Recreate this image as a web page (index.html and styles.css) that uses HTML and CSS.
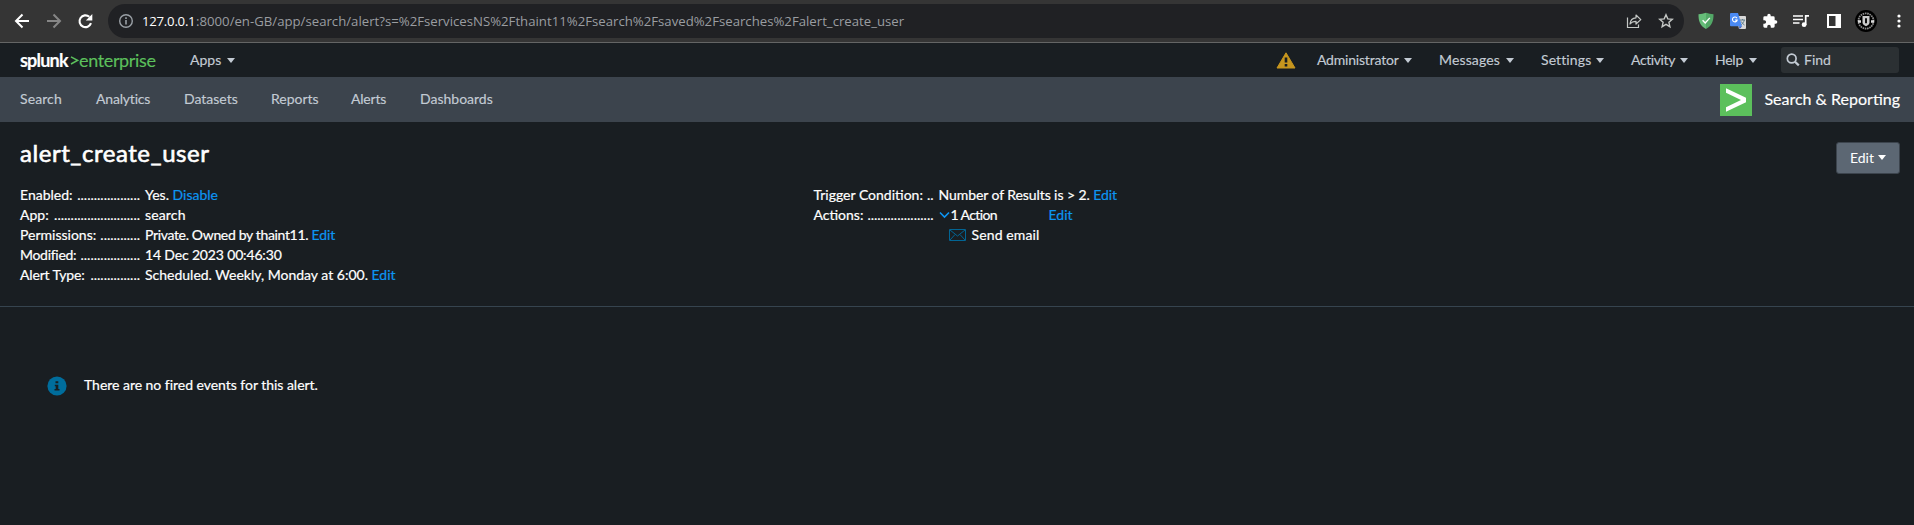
FILE: index.html
```html
<!DOCTYPE html>
<html lang="en">
<head>
<meta charset="utf-8">
<title>alert_create_user | Splunk</title>
<link rel="stylesheet" href="styles.css">
</head>
<body>
<div class="browser">
  <svg class="nav-icons" width="84" height="20" viewBox="0 0 84 20" fill="none" stroke-width="2">
    <path d="M15 10H2M8.500 3.500L2 10l6.500 6.500" stroke="#fff"/>
    <path d="M33 10h13M39.500 3.500L46 10l-6.500 6.500" stroke="#868686"/>
    <path d="M77 12.200A5.900 5.900 0 1 1 75.300 5.800" stroke="#fff" stroke-width="2.100"/>
    <path d="M78.300 3v6.500h-6.500z" fill="#fff"/>
  </svg>
  <div class="omnibox">
    <svg class="site-info" width="16" height="16" viewBox="0 0 16 16"><circle cx="8" cy="8" r="6.300" fill="none" stroke="#9aa0a6" stroke-width="1.400"/><path d="M8 7v4.500M8 4.300v1.600" stroke="#9aa0a6" stroke-width="1.600"/></svg>
    <div class="url"><span class="host">127.0.0.1</span><span class="path">:8000/en-GB/app/search/alert?s=%2FservicesNS%2Fthaint11%2Fsearch%2Fsaved%2Fsearches%2Falert_create_user</span></div>
    <svg class="share" width="16" height="16" viewBox="0 0 16 16" fill="none" stroke="#c4c7c5" stroke-width="1.200"><path d="M1.500 4.500v10h11v-3"/><path d="M4 11c.4-4 2.800-6 6-6.200V2l4.800 4.600L10 11V8.300C7.600 8.300 5.500 9 4 11z" stroke-linejoin="round"/></svg>
    <svg class="star" width="16" height="16" viewBox="0 0 16 16"><path d="M8 1.800l1.800 4.100 4.500.4-3.400 3 1 4.400L8 11.400l-3.900 2.300 1-4.400-3.400-3 4.500-.4z" fill="none" stroke="#c4c7c5" stroke-width="1.400"/></svg>
  </div>
  <div class="extensions">
    <svg class="shield" width="16" height="18" viewBox="0 0 16 18"><path d="M8 .8c2.500.9 5 1.300 7.500 1.400C15.700 9.500 13.500 14 8 17z" fill="#53a867"/><path d="M8 .8C5.500 1.700 3 2.100.5 2.200.3 9.500 2.500 14 8 17z" fill="#66bd79"/><path d="M4.600 8.300l2.600 2.600 4.600-5" fill="none" stroke="#fff" stroke-width="1.400"/></svg>
    <svg class="translate" width="16" height="16" viewBox="0 0 16 16"><path d="M6 3h9a1 1 0 0 1 1 1v11a1 1 0 0 1-1 1H9z" fill="#d8d8d8"/><path d="M9 13.300h3.200L9.500 16z" fill="#3a5bbd"/><path d="M1 0h7l4 13.300H1a1 1 0 0 1-1-1V1a1 1 0 0 1 1-1z" fill="#4a8af4"/><path d="M7 5.300A2.400 2.400 0 1 0 7.200 7H5" fill="none" stroke="#fff" stroke-width="1.100"/><path d="M10 7h5M12.500 6v1M14.300 7c-.5 2-1.500 3.500-3 4.600M11.300 8.500c.7 1.500 1.700 2.500 3.200 3.500" fill="none" stroke="#607d8b"/></svg>
    <svg class="puzzle" width="16" height="16" viewBox="0 0 24 24"><path fill="#fff" d="M20.500 11H19V7a2 2 0 0 0-2-2h-4V3.500a2.500 2.500 0 0 0-5 0V5H4a2 2 0 0 0-2 2v3.800h1.500a2.700 2.700 0 0 1 0 5.400H2V20a2 2 0 0 0 2 2h3.800v-1.500a2.700 2.700 0 0 1 5.400 0V22H17a2 2 0 0 0 2-2v-4h1.500a2.500 2.500 0 0 0 0-5z"/></svg>
    <svg class="media" width="17" height="14" viewBox="0 0 17 14"><path d="M0 2h10M0 5.500h10M0 9h6.500M12.700 11V1.900H16" fill="none" stroke="#fff" stroke-width="1.700"/><circle cx="11.100" cy="10.700" r="2.400" fill="#fff"/></svg>
    <svg class="panel" width="14" height="14" viewBox="0 0 14 14"><path fill="#fff" fill-rule="evenodd" d="M0 0h14v14H0zM2 2v10h6.500V2z"/></svg>
    <svg class="avatar" width="22" height="22" viewBox="0 0 22 22"><circle cx="11" cy="11" r="11" fill="#000"/><circle cx="11" cy="11" r="7.600" fill="none" stroke="#8a8a8a" stroke-width="1.800" stroke-dasharray="1.600 .7"/><path d="M7.500 6h7v6.500c0 2-1.700 3-3.500 3.700-1.800-.7-3.500-1.700-3.500-3.700z" fill="#ccc"/><path d="M11 8.300v5" stroke="#111" stroke-width="2"/><path d="M3 11.500h3M16 11.500h3" stroke="#ddd" stroke-width="2.400"/></svg>
    <svg class="dots-menu" width="4" height="16" viewBox="0 0 4 16" fill="#fff"><circle cx="2" cy="3" r="1.600"/><circle cx="2" cy="8" r="1.600"/><circle cx="2" cy="13" r="1.600"/></svg>
  </div>
</div>

<header class="topbar">
  <div class="logo"><span class="logo-splunk">splunk</span><svg width="9" height="12" viewBox="0 0 9 12"><path d="M1 2.800l6.500 3.600L1 10" fill="none" stroke="#5cc05c" stroke-width="1.500"/></svg><span class="logo-product">enterprise</span></div>
  <a class="menu apps">Apps<i class="caret"></i></a>
  <div class="top-right">
    <svg class="warning" width="20" height="17" viewBox="0 0 20 17"><path d="M10 .8L19 16H1z" fill="#c7961e" stroke="#c7961e" stroke-width="1" stroke-linejoin="round"/><path d="M10 5.500v5M10 12v2.500" stroke="#171d21" stroke-width="2.600"/></svg>
    <a class="menu admin">Administrator<i class="caret"></i></a>
    <a class="menu messages">Messages<i class="caret"></i></a>
    <a class="menu settings">Settings<i class="caret"></i></a>
    <a class="menu activity">Activity<i class="caret"></i></a>
    <a class="menu help">Help<i class="caret"></i></a>
    <div class="find"><svg width="14" height="14" viewBox="0 0 14 14" fill="none" stroke="#c3cbd4"><circle cx="5.700" cy="5.500" r="4.400" stroke-width="1.700"/><path d="M9 8.800l3.800 3.600" stroke-width="2.200"/></svg><span>Find</span></div>
  </div>
</header>

<nav class="appbar">
  <a class="n-search">Search</a><a class="n-analytics">Analytics</a><a class="n-datasets">Datasets</a><a class="n-reports">Reports</a><a class="n-alerts">Alerts</a><a class="n-dash">Dashboards</a>
  <div class="app-name">
    <svg width="32" height="32" viewBox="0 0 32 32"><path fill="#5cc05c" d="M0 0h32v32H0z"/><path fill="#fff" d="M6 4.300l20 9.400v4.600L6 27.700v-4.500L21 16 6 8.800z"/></svg>
    <span>Search &amp; Reporting</span>
  </div>
</nav>

<main>
  <section class="heading">
    <h1>alert_create_user</h1>
    <button class="edit-button">Edit<i class="caret"></i></button>
  </section>
  <section class="details">
    <dl class="left">
      <dt><span>Enabled:</span><span>...................</span></dt><dd>Yes. <a>Disable</a></dd>
      <dt><span>App:</span><span>..........................</span></dt><dd class="wide">search</dd>
      <dt><span>Permissions:</span><span>............</span></dt><dd><span class="owner">Private. Owned by thaint11. </span><a>Edit</a></dd>
      <dt><span class="t-modified">Modified:</span><span>..................</span></dt><dd class="date">14 Dec 2023 00:46:30</dd>
      <dt><span class="t-type">Alert Type:</span><span>...............</span></dt><dd>Scheduled. Weekly, Monday at 6:00. <a>Edit</a></dd>
    </dl>
    <dl class="right">
      <dt><span>Trigger Condition:</span><span>..</span></dt><dd class="condition">Number of Results is &gt; 2. <a>Edit</a></dd>
      <dt><span>Actions:</span><span>....................</span></dt>
      <dd class="actions"><svg width="11" height="8" viewBox="0 0 11 8"><path d="M1 1.500l4.500 4.500L10 1.500" fill="none" stroke="#0d95f2" stroke-width="1.600"/></svg><span class="count">1 Action</span><a>Edit</a></dd>
      <dd class="email"><svg width="17" height="12" viewBox="0 0 17 12" fill="none" stroke="#026594"><path d="M.5.5h16v11H.5zM1 1l7.500 6L16 1M1 11l5-5.500M16 11l-5-5.500"/></svg><span>Send email</span></dd>
    </dl>
  </section>
  <section class="message">
    <svg width="20" height="20" viewBox="0 0 20 20"><circle cx="10" cy="10" r="9.600" fill="#006d9c"/><path d="M8.500 5.300h2.800v2H8.500zM7.800 8.700h3.500v4.200h1.200v1.600H7.500v-1.600h1.200v-2.600h-.9z" fill="#171d21"/></svg>
    <span>There are no fired events for this alert.</span>
  </section>
</main>
</body>
</html>
```
FILE: styles.css
```css
* { box-sizing: border-box; }
body {
  margin: 0;
  height: 525px;
  overflow: hidden;
  background: #191e22;
  color: #fff;
  font: 14px/20px Lato, "Liberation Sans", sans-serif;
}
svg { display: block; flex: none; }
span, a { white-space: pre; }

.browser {
  display: flex;
  height: 43px;
  padding: 4px 13px 0 14px;
  background: #353535;
  border-bottom: 1px solid #646565;
}
.nav-icons { margin-top: 7px; }
.omnibox {
  display: flex;
  align-items: center;
  width: 1576px;
  height: 34px;
  margin-left: 10px;
  padding: 0 10px;
  border-radius: 17px;
  background: #202124;
}
.url {
  display: flex;
  margin-left: 8px;
  font: 13.2px/20px "Open Sans", "Noto Sans", sans-serif;
}
.host { width: 54px; letter-spacing: -0.25px; }
.path { color: #9a9da1; }
.share { margin-left: auto; }
.star { margin: 0 0 0 16px; }
.extensions { display: flex; align-items: center; height: 34px; margin-left: 14px; }
.translate { margin-left: 16px; }
.puzzle { margin-left: 16px; }
.media { margin-left: 15px; }
.panel { margin-left: 17px; }
.avatar { margin-left: 14px; }
.dots-menu { margin-left: 20px; }

.topbar {
  display: flex;
  align-items: center;
  height: 34px;
  padding: 0 15px 0 20px;
  background: #191e22;
  color: #c3cbd4;
  -webkit-text-stroke: 0.15px;
}
.logo { display: flex; align-items: center; width: 170px; padding-bottom: 1px; font-size: 18px; }
.logo svg { margin-left: 1px; }
.logo-splunk { width: 49px; color: #fff; font-weight: 700; letter-spacing: -0.8px; }
.logo-product { color: #5cc05c; letter-spacing: -0.36px; }
.caret {
  display: inline-block;
  border: 4px solid transparent;
  border-top: 5px solid currentColor;
  border-bottom: 0;
}
.menu { display: flex; align-items: center; justify-content: space-between; }
.apps { width: 45px; }
.top-right { display: flex; align-items: center; margin-left: auto; }
.admin { width: 95px; margin-left: 21px; letter-spacing: -0.2px; }
.messages { width: 75px; margin-left: 27px; letter-spacing: 0.14px; }
.settings { width: 63px; margin-left: 27px; letter-spacing: 0.11px; }
.activity { width: 57px; margin-left: 27px; letter-spacing: -0.4px; }
.help { width: 42px; margin-left: 27px; letter-spacing: -0.25px; }
.find {
  display: flex;
  align-items: center;
  width: 118px;
  height: 26px;
  margin-left: 24px;
  padding-left: 5px;
  gap: 4px;
  border-radius: 3px;
  background: #2b3033;
}

.appbar {
  display: flex;
  align-items: center;
  height: 45px;
  padding: 0 14px 0 20px;
  background: #3c444d;
  color: #c3cbd4;
  -webkit-text-stroke: 0.15px;
}
.appbar > a { padding-bottom: 1px; }
.n-search { width: 76px; letter-spacing: 0.1px; }
.n-analytics { width: 88px; letter-spacing: -0.18px; }
.n-datasets { width: 87px; }
.n-reports { width: 80px; }
.n-alerts { width: 69px; letter-spacing: -0.2px; }
.app-name { display: flex; align-items: center; gap: 12px; margin-left: auto; color: #fff; font-size: 16px; }
.app-name span { padding-bottom: 1px; }

.heading { display: flex; justify-content: space-between; height: 63px; padding: 15px 14px 0 20px; }
h1 { margin: 2px 0 0; font-size: 24px; line-height: 28px; font-weight: 400; letter-spacing: 0.55px; -webkit-text-stroke: 0.6px #fff; }
.edit-button {
  display: flex;
  align-items: center;
  justify-content: center;
  gap: 4px;
  width: 64px;
  height: 32px;
  margin-top: 5px;
  padding: 0 0 1px;
  border: 1px solid #3c444d;
  border-radius: 3px;
  background: #5c6773;
  color: #fff;
  font: inherit;
}
.details { display: flex; height: 122px; padding-left: 20px; border-bottom: 1px solid #36444f; -webkit-text-stroke: 0.2px; }
dl { display: grid; grid-template-columns: 120px 1fr; column-gap: 5px; grid-auto-rows: 20px; margin: 0; }
.left { width: 793px; }
.right { padding-left: 0.5px; }
dt { display: flex; justify-content: space-between; }
dd { margin: 0; white-space: pre; }
dd a { color: #0d95f2; }
.owner { letter-spacing: -0.34px; }
.wide { letter-spacing: 0.15px; }
.t-modified { letter-spacing: -0.3px; }
.t-type { letter-spacing: -0.17px; }
.date { letter-spacing: -0.16px; }
.condition { letter-spacing: -0.08px; }
.actions { display: flex; align-items: center; }
.count { width: 98px; margin-left: 1px; letter-spacing: -0.6px; }
.email { grid-column: 2; display: flex; align-items: center; gap: 6px; padding-left: 10px; letter-spacing: 0.13px; }
.message { display: flex; align-items: center; gap: 17px; padding: 68px 0 0 47px; -webkit-text-stroke: 0.2px; }
.message span { padding-bottom: 1px; letter-spacing: -0.03px; }
```
